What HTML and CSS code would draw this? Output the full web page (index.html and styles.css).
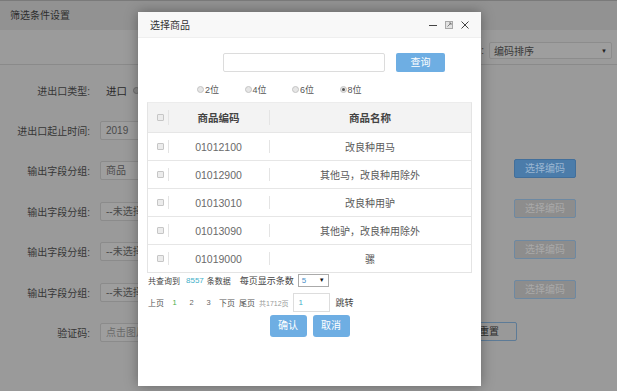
FILE: index.html
```html
<!DOCTYPE html>
<html lang="zh-CN">
<head>
<meta charset="utf-8">
<title>筛选条件设置</title>
<link rel="stylesheet" href="styles.css">
</head>
<body>
<div class="page">
  <div class="page-head">筛选条件设置</div>
  <div class="toolbar">
    <span class="colon">:</span>
    <div class="sort-select"><span>编码排序</span><span class="caret">▼</span></div>
  </div>
  <div class="form">
    <div class="row">
      <div class="label">进出口类型:</div>
      <div class="field"><span class="opt">进口</span><span class="bg-radio"></span></div>
      <div></div>
    </div>
    <div class="row">
      <div class="label">进出口起止时间:</div>
      <div class="field"><div class="bg-input">2019</div></div>
      <div></div>
    </div>
    <div class="row">
      <div class="label">输出字段分组:</div>
      <div class="field"><div class="bg-input">商品</div></div>
      <div class="act"><span class="bg-btn primary">选择编码</span></div>
    </div>
    <div class="row">
      <div class="label">输出字段分组:</div>
      <div class="field"><div class="bg-input">--未选择</div></div>
      <div class="act"><span class="bg-btn disabled">选择编码</span></div>
    </div>
    <div class="row">
      <div class="label">输出字段分组:</div>
      <div class="field"><div class="bg-input">--未选择</div></div>
      <div class="act"><span class="bg-btn disabled">选择编码</span></div>
    </div>
    <div class="row">
      <div class="label">输出字段分组:</div>
      <div class="field"><div class="bg-input">--未选择</div></div>
      <div class="act"><span class="bg-btn disabled">选择编码</span></div>
    </div>
    <div class="row">
      <div class="label">验证码:</div>
      <div class="field wide"><div class="bg-input ph">点击图片刷新</div><span class="bg-btn reset">重置</span></div>
    </div>
  </div>
</div>

<div class="modal">
  <div class="modal-head">
    <span class="modal-title">选择商品</span>
    <span class="tools">
      <svg width="10" height="10" viewBox="0 0 10 10"><line x1="1" y1="5.5" x2="9" y2="5.5" stroke="#444" stroke-width="1"/></svg>
      <svg width="10" height="10" viewBox="0 0 10 10"><rect x="1.5" y="1.5" width="7" height="7" fill="#e2e2e2" stroke="#a8a8a8"/><path d="M3.5 6.5 L7 3 M5 3 H7 V5" stroke="#777" fill="none" stroke-width="0.9"/></svg>
      <svg width="10" height="10" viewBox="0 0 10 10"><path d="M1.5 1.5 L8.5 8.5 M8.5 1.5 L1.5 8.5" stroke="#444" stroke-width="1"/></svg>
    </span>
  </div>
  <div class="search-row">
    <div class="search-input"></div>
    <span class="btn">查询</span>
  </div>
  <div class="radio-row">
    <label class="r"><span class="dot"></span>2位</label>
    <label class="r"><span class="dot"></span>4位</label>
    <label class="r"><span class="dot"></span>6位</label>
    <label class="r"><span class="dot on"></span>8位</label>
  </div>
  <div class="table">
    <div class="tr th">
      <div class="c1"><span class="cb"></span></div>
      <div class="c2">商品编码</div>
      <div class="c3">商品名称</div>
    </div>
    <div class="tr">
      <div class="c1"><span class="cb"></span></div>
      <div class="c2">01012100</div>
      <div class="c3">改良种用马</div>
    </div>
    <div class="tr">
      <div class="c1"><span class="cb"></span></div>
      <div class="c2">01012900</div>
      <div class="c3">其他马，改良种用除外</div>
    </div>
    <div class="tr">
      <div class="c1"><span class="cb"></span></div>
      <div class="c2">01013010</div>
      <div class="c3">改良种用驴</div>
    </div>
    <div class="tr">
      <div class="c1"><span class="cb"></span></div>
      <div class="c2">01013090</div>
      <div class="c3">其他驴，改良种用除外</div>
    </div>
    <div class="tr">
      <div class="c1"><span class="cb"></span></div>
      <div class="c2">01019000</div>
      <div class="c3">骡</div>
    </div>
  </div>
  <div class="info-row">
    <span class="s8">共查询到</span>
    <span class="num">8557</span>
    <span class="s8">条数据</span>
    <span class="s9 per">每页显示条数</span>
    <span class="mini-select"><span class="v">5</span><span class="caret">▼</span></span>
  </div>
  <div class="pager">
    <span>上页</span>
    <span class="pg cur">1</span>
    <span class="pg">2</span>
    <span class="pg">3</span>
    <span>下页</span>
    <span>尾页</span>
    <span class="total">共1712页</span>
    <span class="jump-input">1</span>
    <span class="jump">跳转</span>
  </div>
  <div class="actions">
    <span class="btn big">确认</span>
    <span class="btn big">取消</span>
  </div>
</div>
</body>
</html>
```

FILE: styles.css
```css
* { box-sizing: border-box; }
html, body { margin: 0; padding: 0; }
body {
  width: 617px;
  height: 391px;
  overflow: hidden;
  font-family: "Liberation Sans", "Noto Sans CJK SC", sans-serif;
  background: #9a9a9a;
  position: relative;
}
.page { width: 617px; height: 391px; background: #9a9a9a; }
.page-head {
  height: 30px;
  background: #929292;
  border-top: 1px solid #7a7a7a;
  padding-left: 10px;
  font-size: 10px;
  line-height: 29px;
  color: #2e2e2e;
}
.toolbar {
  height: 35px;
  background: #9b9b9b;
  border-bottom: 1px solid #8a8a8a;
  display: flex;
  align-items: flex-start;
  justify-content: flex-end;
  padding: 12px 5px 0 0;
}
.colon { font-size: 10px; color: #333; margin-right: 5px; line-height: 17px; }
.sort-select {
  width: 123px;
  height: 17px;
  border: 1px solid #8c8c8c;
  border-radius: 2px;
  background: #9e9e9e;
  display: flex;
  justify-content: space-between;
  align-items: center;
  padding: 0 4px 0 4px;
  font-size: 10px;
  color: #3a3a3a;
}
.sort-select .caret { font-size: 6px; color: #222; }

.form { padding-top: 5px; }
.row {
  display: grid;
  grid-template-columns: 90px 1fr 62px;
  column-gap: 10px;
  height: 40.4px;
  align-items: center;
  padding-right: 41px;
}
.label { text-align: right; font-size: 10px; color: #363636; white-space: nowrap; }
.field { display: flex; align-items: center; }
.field.wide { grid-column: 2 / 4; }
.opt { font-size: 10.5px; color: #2a2a2a; margin-left: 6px; }
.bg-radio {
  width: 7px; height: 7px; border-radius: 50%;
  border: 1px solid #6c6c6c; background: #888;
  margin-left: 6px;
}
.bg-input {
  width: 220px;
  height: 19px;
  border: 1px solid #8b8b8b;
  border-radius: 2px;
  background: #9e9e9e;
  font-size: 10px;
  color: #4a4a4a;
  line-height: 17px;
  padding-left: 5px;
}
.bg-input.ph { color: #6a6a6a; }
.act { display: flex; margin-top: -5px; }
.bg-btn {
  display: inline-block;
  height: 19px;
  border-radius: 2px;
  font-size: 10px;
  line-height: 17px;
  text-align: center;
}
.act .bg-btn { width: 62px; }
.bg-btn.primary { background: #4b7caa; border: 1px solid #426f9b; color: #9bb7d2; }
.bg-btn.disabled { background: #8d8d8d; border: 1px solid #6e89a2; color: #a9a9a9; }
.bg-btn.reset {
  width: 56px;
  margin-left: auto;
  margin-right: 59px;
  border: 1px solid #5d7b97;
  background: #999;
  color: #2c2c2c;
  margin-top: -2px;
}

/* modal dialog */
.modal {
  position: absolute;
  left: 138px;
  top: 12px;
  width: 343px;
  height: 374px;
  background: #fff;
  box-shadow: 0 0 12px rgba(0,0,0,0.35);
}
.modal-head {
  height: 26px;
  background: #f8f8f8;
  border-bottom: 1px solid #efefef;
  display: flex;
  align-items: center;
  justify-content: space-between;
  padding: 0 11px 0 12px;
}
.modal-title { font-size: 10px; color: #333; }
.tools { display: flex; gap: 6px; align-items: center; }
.tools svg { display: block; }

.search-row {
  display: flex;
  margin-top: 15px;
  padding-left: 85px;
  height: 19px;
}
.search-input {
  width: 162px;
  height: 19px;
  border: 1px solid #dcdcdc;
  border-radius: 2px;
}
.btn {
  display: inline-block;
  background: #6eaee3;
  color: #fff;
  font-size: 10px;
  text-align: center;
  border-radius: 2px;
}
.search-row .btn { width: 49px; height: 19px; line-height: 19px; margin-left: 11px; }

.radio-row {
  display: flex;
  margin-top: 11px;
  padding-left: 59px;
  height: 12px;
  align-items: center;
}
.r {
  width: 47.5px;
  display: flex;
  align-items: center;
  font-size: 9px;
  color: #555;
}
.dot {
  width: 7px; height: 7px; border-radius: 50%;
  border: 1px solid #c4c4c4; background: #e6e6e6;
  margin-right: 1px;
  position: relative;
}
.dot.on::after {
  content: "";
  position: absolute;
  left: 1px; top: 1px;
  width: 3px; height: 3px; border-radius: 50%;
  background: #555;
}

.table {
  margin: 7px 0 0 9px;
  width: 325px;
  border: 1px solid #e4e4e4;
  border-top: 1px solid #ececec;
}
.tr {
  display: grid;
  grid-template-columns: 20px 101px 1fr;
  height: 28px;
  align-items: center;
  border-top: 1px solid #e6e6e6;
}
.tr:first-child { border-top: 0; }
.tr.th { height: 29px; background: #f3f3f3; }
.tr > div { position: relative; text-align: center; }
.c1 { display: flex; justify-content: center; align-items: center; height: 100%; }
.c2, .c3 { height: 100%; display: flex; align-items: center; justify-content: center; }
.c2::before, .c3::before {
  content: "";
  position: absolute;
  left: 0; top: 7px; bottom: 7px;
  width: 1px;
  background: #e4e4e4;
}
.cb {
  width: 7px; height: 7px;
  border: 1px solid #c6c6c6;
  background: #ececec;
  border-radius: 1px;
  margin-left: 4px;
}
.c2 { font-size: 10.5px; color: #6a6a6a; }
.c3 { font-size: 10px; color: #5a5a5a; }
.th .c2, .th .c3 { font-size: 10.5px; color: #444; font-weight: bold; }

.info-row {
  display: flex;
  align-items: center;
  height: 14px;
  margin-top: 0;
  padding-left: 10px;
  color: #444;
}
.s8 { font-size: 8px; }
.s9 { font-size: 9px; }
.num { font-size: 8px; color: #3fb0c9; margin: 0 3px 0 6px; }
.per { margin-left: 9px; }
.mini-select {
  width: 31px;
  height: 13px;
  border: 1px solid #aaa;
  margin-left: 4px;
  display: flex;
  justify-content: space-between;
  align-items: center;
  padding: 0 3px 0 3px;
  font-size: 8px;
}
.mini-select .v { color: #4a90c8; }
.mini-select .caret { font-size: 6px; color: #111; }

.pager {
  display: flex;
  align-items: center;
  height: 19px;
  margin-top: 6px;
  padding-left: 10px;
  font-size: 8px;
  color: #555;
  gap: 4px;
}
.pg { font-size: 7.5px; color: #666; width: 13px; text-align: center; }
.pg.cur { color: #4cae4c; }
.total { font-size: 7px; color: #999; }
.jump-input {
  width: 37px;
  height: 19px;
  border: 1px solid #ddd;
  font-size: 8px;
  color: #3fb0c9;
  line-height: 17px;
  padding-left: 5px;
}
.jump { font-size: 9px; color: #444; margin-left: 2px; }

.actions {
  display: flex;
  justify-content: center;
  gap: 6px;
  margin-top: 3px;
}
.btn.big { width: 37px; height: 22px; line-height: 22px; border-radius: 3px; }
```
